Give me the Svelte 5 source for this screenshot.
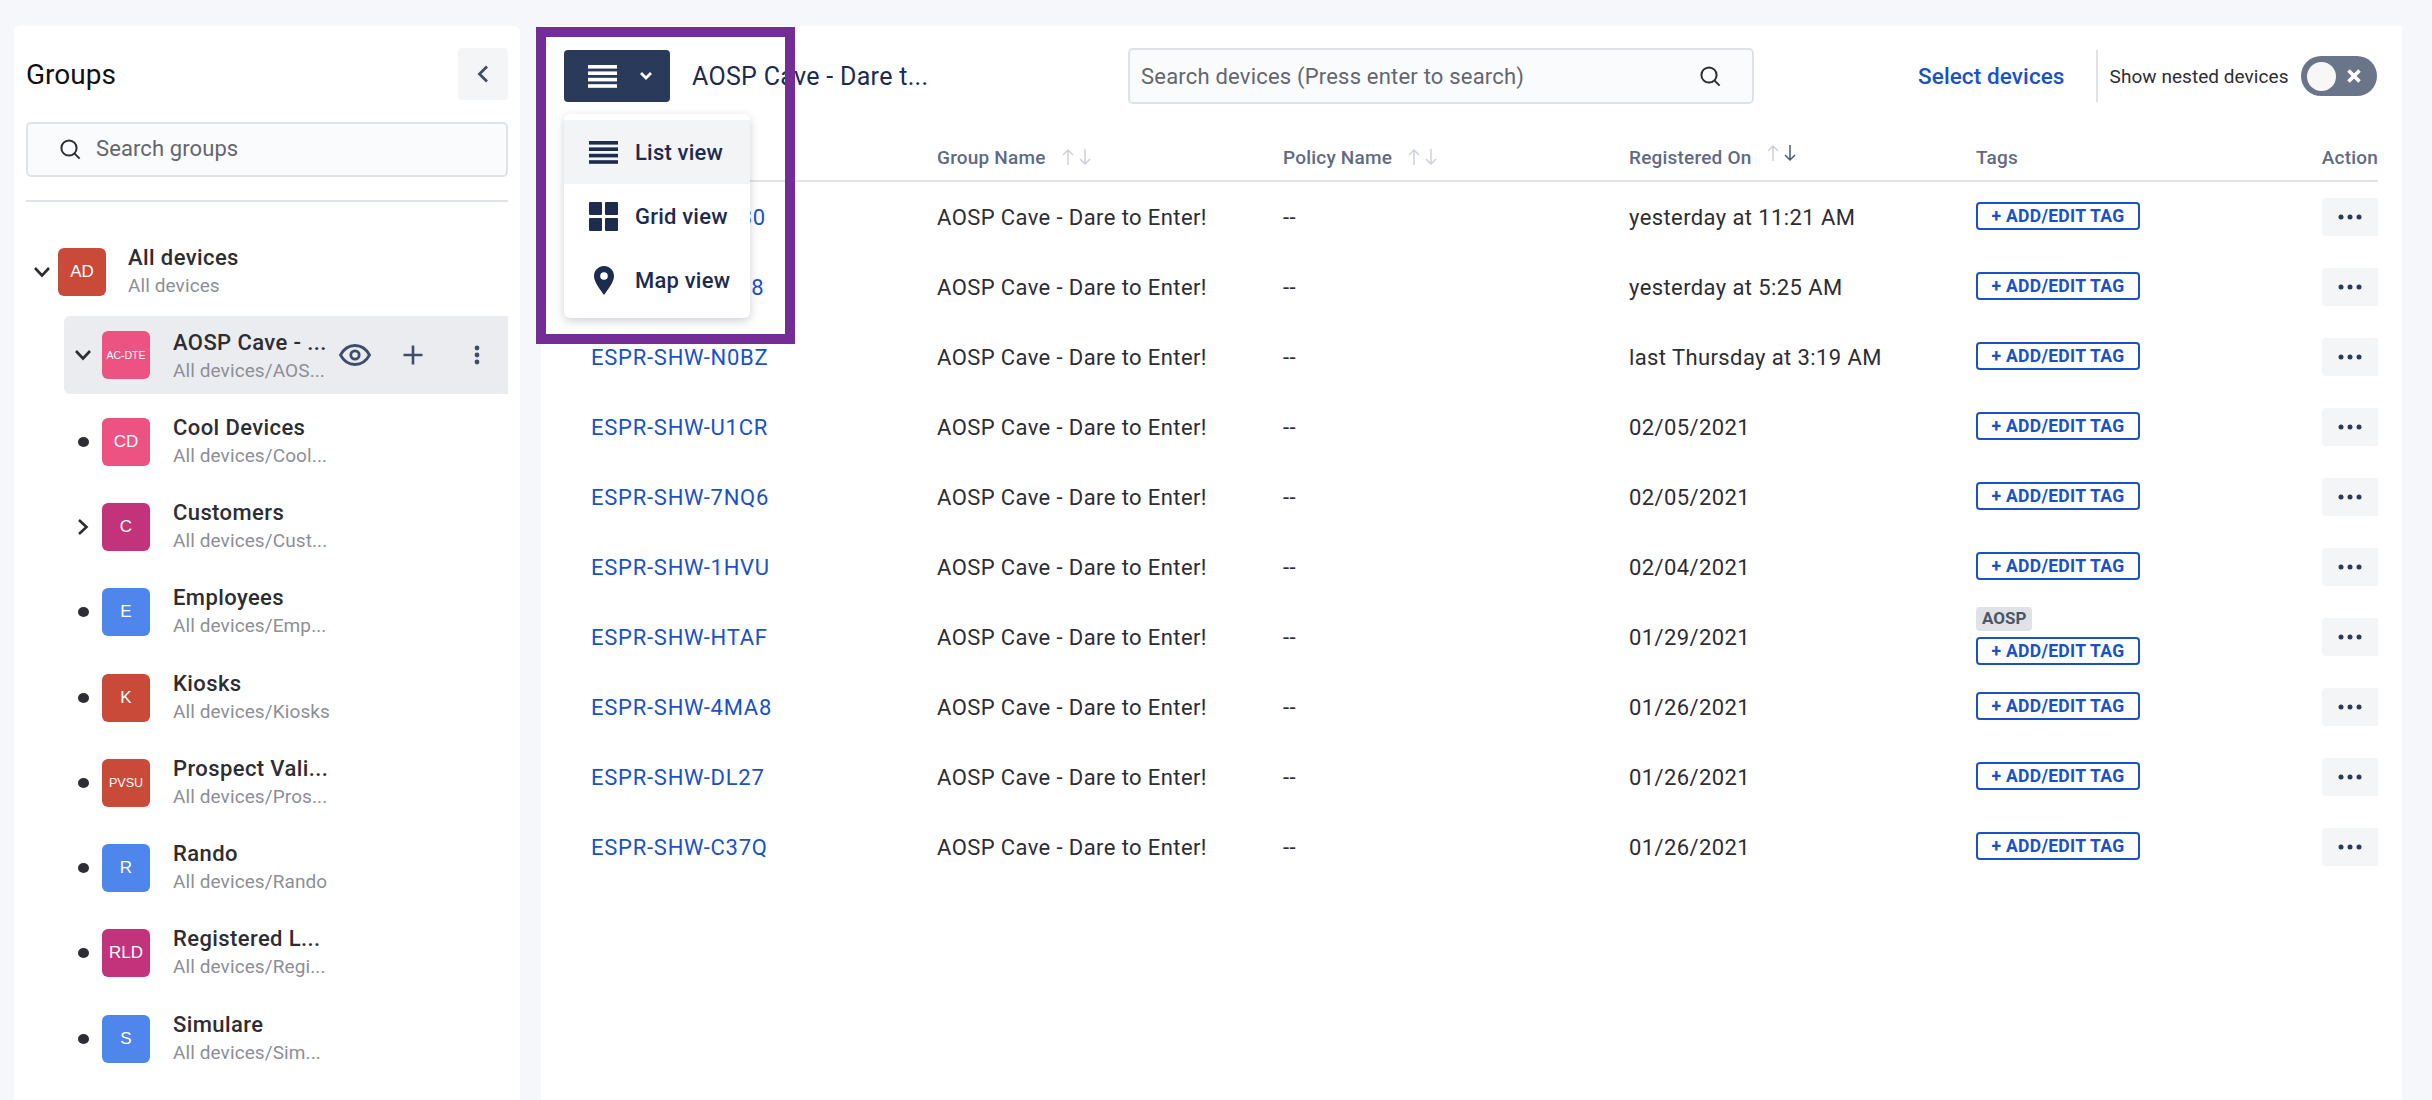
<script>
  const groups = [
    { code: "CD", color: "#ec5282", name: "Cool Devices", path: "All devices/Cool..." },
    { code: "C", color: "#c2337c", name: "Customers", path: "All devices/Cust...", more: true },
    { code: "E", color: "#4f86ec", name: "Employees", path: "All devices/Emp..." },
    { code: "K", color: "#c94a38", name: "Kiosks", path: "All devices/Kiosks" },
    { code: "PVSU", color: "#c94a38", name: "Prospect Vali...", path: "All devices/Pros...", small: true },
    { code: "R", color: "#4f86ec", name: "Rando", path: "All devices/Rando" },
    { code: "RLD", color: "#c2337c", name: "Registered L...", path: "All devices/Regi..." },
    { code: "S", color: "#4f86ec", name: "Simulare", path: "All devices/Sim..." }
  ];

  const devices = [
    { id: "ESPR-SHW-XK30", date: "yesterday at 11:21 AM" },
    { id: "ESPR-SHW-P2F8", date: "yesterday at 5:25 AM" },
    { id: "ESPR-SHW-N0BZ", date: "last Thursday at 3:19 AM" },
    { id: "ESPR-SHW-U1CR", date: "02/05/2021" },
    { id: "ESPR-SHW-7NQ6", date: "02/05/2021" },
    { id: "ESPR-SHW-1HVU", date: "02/04/2021" },
    { id: "ESPR-SHW-HTAF", date: "01/29/2021", tag: "AOSP" },
    { id: "ESPR-SHW-4MA8", date: "01/26/2021" },
    { id: "ESPR-SHW-DL27", date: "01/26/2021" },
    { id: "ESPR-SHW-C37Q", date: "01/26/2021" }
  ];

  const columns = [
    { label: "", sort: false },
    { label: "Group Name", sort: true },
    { label: "Policy Name", sort: true },
    { label: "Registered On", sort: true, active: true },
    { label: "Tags", sort: false }
  ];
</script>

{#snippet chevron(rotate)}
  <svg class="chev" style="transform: rotate({rotate}deg)" viewBox="0 0 18 12" width="18" height="12">
    <path d="M2 2l7 7.5L16 2" fill="none" stroke="#2d2d33" stroke-width="2.6" />
  </svg>
{/snippet}

{#snippet listIcon(color)}
  <svg viewBox="0 0 29 23" width="29" height="23">
    <rect y="0" width="29" height="3.6" fill={color} />
    <rect y="6.4" width="29" height="3.6" fill={color} />
    <rect y="12.8" width="29" height="3.6" fill={color} />
    <rect y="19.2" width="29" height="3.6" fill={color} />
  </svg>
{/snippet}

{#snippet searchIcon()}
  <svg viewBox="0 0 22 22" width="22" height="22">
    <circle cx="10" cy="10" r="7.6" fill="none" stroke="#2d2d33" stroke-width="2" />
    <path d="M15.4 15.4L20.6 20.6" stroke="#2d2d33" stroke-width="2" />
  </svg>
{/snippet}

<div class="page">
  <aside class="sidebar">
    <div class="side-head">
      <h2>Groups</h2>
      <button class="collapse" aria-label="Collapse">
        <svg viewBox="0 0 14 20" width="14" height="20">
          <path d="M11 2.500L3.500 10l7.500 7.500" fill="none" stroke="#3d4d6b" stroke-width="2.800" />
        </svg>
      </button>
    </div>
    <div class="side-search">
      {@render searchIcon()}
      <span>Search groups</span>
    </div>
    <div class="side-rule"></div>

    <div class="root-row">
      <span class="tree-mark">{@render chevron(0)}</span>
      <span class="avatar" style="background: #c94a38">AD</span>
      <div class="names">
        <div class="name">All devices</div>
        <div class="path">All devices</div>
      </div>
    </div>

    <div class="selected-row">
      <span class="tree-mark">{@render chevron(0)}</span>
      <span class="avatar tiny" style="background: #ec5282">AC-DTE</span>
      <div class="names">
        <div class="name">AOSP Cave - ...</div>
        <div class="path">All devices/AOS...</div>
      </div>
      <div class="row-actions">
        <svg viewBox="0 0 32 24" width="32" height="24">
          <path d="M1.500 12C5 5.500 10 2.500 16 2.500S27 5.500 30.500 12C27 18.500 22 21.500 16 21.500S5 18.500 1.500 12z" fill="none" stroke="#3d4d6b" stroke-width="2.800" />
          <circle cx="16" cy="12" r="4.200" fill="none" stroke="#3d4d6b" stroke-width="2.800" />
        </svg>
        <svg viewBox="0 0 20 20" width="20" height="20">
          <path d="M10 0.500v19M0.500 10h19" stroke="#3d4d6b" stroke-width="2.600" />
        </svg>
        <svg class="kebab" viewBox="0 0 6 20" width="6" height="20">
          <circle cx="3" cy="3" r="2.400" fill="#3d4d6b" />
          <circle cx="3" cy="10" r="2.400" fill="#3d4d6b" />
          <circle cx="3" cy="17" r="2.400" fill="#3d4d6b" />
        </svg>
      </div>
    </div>

    {#each groups as group}
      <div class="group-row">
        <span class="tree-mark">
          {#if group.more}
            {@render chevron(-90)}
          {:else}
            <span class="bullet"></span>
          {/if}
        </span>
        <span class="avatar" class:small={group.small} style="background: {group.color}">{group.code}</span>
        <div class="names">
          <div class="name">{group.name}</div>
          <div class="path">{group.path}</div>
        </div>
      </div>
    {/each}
    <div class="group-row">
      <span class="tree-mark"></span>
      <span class="avatar" style="background: #ec5282"></span>
    </div>
  </aside>

  <main class="content">
    <div class="toolbar">
      <button class="view-btn" aria-label="Change view">
        {@render listIcon("#fff")}
        <svg viewBox="0 0 14 10" width="14" height="10">
          <path d="M2 2l5 5 5-5" fill="none" stroke="#fff" stroke-width="2.800" />
        </svg>
      </button>
      <div class="title">AOSP Cave - Dare t...</div>
      <div class="device-search">
        <span>Search devices (Press enter to search)</span>
        {@render searchIcon()}
      </div>
      <a class="select-link" href="#select">Select devices</a>
      <div class="bar-rule"></div>
      <span class="nested-label">Show nested devices</span>
      <div class="toggle">
        <span class="knob"></span>
        <svg viewBox="0 0 16 16" width="16" height="16">
          <path d="M2.500 2.500l11 11M13.500 2.500l-11 11" stroke="#fff" stroke-width="3.600" />
        </svg>
      </div>
    </div>

    <div class="table">
      <div class="thead">
        {#each columns as col}
          <div class="th">
            {col.label}
            {#if col.sort}
              <svg class="sort" class:raised={col.active} viewBox="0 0 34 18" width="34" height="18">
                <path d="M7 17V2M2 7l5-5 5 5" fill="none" stroke="#cdd1da" stroke-width="1.500" />
                <path d="M24 1v15M19 11l5 5 5-5" fill="none" stroke={col.active ? "#4a5a78" : "#cdd1da"} stroke-width="1.500" />
              </svg>
            {/if}
          </div>
        {/each}
        <div class="th action-head">Action</div>
      </div>
      {#each devices as device}
        <div class="tr">
          <a class="device-id" href="#device">{device.id}</a>
          <div>AOSP Cave - Dare to Enter!</div>
          <div>--</div>
          <div>{device.date}</div>
          <div class="tags">
            {#if device.tag}<span class="tag">{device.tag}</span>{/if}
            <span class="add-tag">+ ADD/EDIT TAG</span>
          </div>
          <div class="action-cell">
            <button class="more" aria-label="More">
              <svg viewBox="0 0 24 6" width="24" height="6">
                <circle cx="3" cy="3" r="2.500" fill="#2a3a5a" />
                <circle cx="12" cy="3" r="2.500" fill="#2a3a5a" />
                <circle cx="21" cy="3" r="2.500" fill="#2a3a5a" />
              </svg>
            </button>
          </div>
        </div>
      {/each}
    </div>

    <div class="view-menu">
      <div class="menu-item active">
        <span class="menu-icon">{@render listIcon("#1c2b4e")}</span>List view
      </div>
      <div class="menu-item">
        <span class="menu-icon">
          <svg viewBox="0 0 29 29" width="29" height="29">
            <rect width="13" height="13" rx="1" fill="#1c2b4e" />
            <rect x="16" width="13" height="13" rx="1" fill="#1c2b4e" />
            <rect y="16" width="13" height="13" rx="1" fill="#1c2b4e" />
            <rect x="16" y="16" width="13" height="13" rx="1" fill="#1c2b4e" />
          </svg>
        </span>Grid view
      </div>
      <div class="menu-item">
        <span class="menu-icon">
          <svg viewBox="0 0 20 29" width="20" height="29">
            <path fill-rule="evenodd" d="M10 0C4.500 0 0 4.400 0 10c0 6.500 7 14.500 10 19 3-4.500 10-12.500 10-19C20 4.400 15.500 0 10 0zm0 6.200a3.800 3.800 0 1 1 0 7.600 3.800 3.800 0 0 1 0-7.600z" fill="#1c2b4e" />
          </svg>
        </span>Map view
      </div>
    </div>
  </main>

  <div class="highlight"></div>
</div>

<style>
  :global(body) {
    margin: 0;
    background: #f5f7fb;
  }

  * {
    box-sizing: border-box;
  }

  .page {
    position: relative;
    display: flex;
    height: 1100px;
    padding-top: 26px;
    padding-left: 14px;
    gap: 21px;
    overflow: hidden;
    background: #f5f7fb;
    font-family: Roboto, "Liberation Sans", sans-serif;
    color: #2d2d33;
  }

  /* sidebar */
  .sidebar {
    width: 506px;
    flex: none;
    padding: 22px 12px 0;
    background: #fff;
    border-radius: 6px 6px 0 0;
  }

  .side-head {
    display: flex;
    align-items: center;
    justify-content: space-between;
    height: 52px;
  }

  h2 {
    margin: 0;
    font-size: 28px;
    font-weight: 400;
    color: #111;
  }

  .collapse {
    display: flex;
    align-items: center;
    justify-content: center;
    width: 50px;
    height: 52px;
    padding: 0;
    border: none;
    border-radius: 4px;
    background: #f4f5f6;
  }

  .side-search {
    display: flex;
    align-items: center;
    gap: 15px;
    height: 55px;
    margin-top: 22px;
    padding-left: 31px;
    padding-bottom: 2px;
    border: 2px solid #dfe2e6;
    border-radius: 5px;
    background: #fafbfd;
    font-size: 22px;
    letter-spacing: 0.1px;
    color: #63666c;
  }

  .side-rule {
    height: 2px;
    margin-top: 23px;
    background: #dfe3e8;
  }

  .root-row {
    display: flex;
    align-items: center;
    height: 48px;
    margin-top: 46px;
  }

  .root-row .tree-mark {
    width: 32px;
  }

  .root-row .avatar {
    margin-right: 22px;
  }

  .tree-mark {
    display: flex;
    align-items: center;
    justify-content: center;
    flex: none;
    width: 38px;
  }

  .chev {
    display: block;
  }

  .bullet {
    width: 11px;
    height: 10px;
    border-radius: 50%;
    background: #2d2d33;
  }

  .avatar {
    display: flex;
    align-items: center;
    justify-content: center;
    flex: none;
    width: 48px;
    height: 48px;
    margin-right: 23px;
    border-radius: 6px;
    font-family: "Liberation Sans", sans-serif;
    font-size: 17px;
    color: #fff;
  }

  .avatar.small {
    font-size: 12.500px;
  }

  .avatar.tiny {
    font-size: 10.500px;
  }

  .names {
    min-width: 0;
  }

  .selected-row .names {
    margin-top: 3px;
  }

  .name {
    font-size: 22px;
    letter-spacing: 0.4px;
    font-weight: 500;
    line-height: 27px;
    white-space: nowrap;
  }

  .path {
    font-size: 19px;
    letter-spacing: 0.1px;
    line-height: 29px;
    color: #8d8f97;
    white-space: nowrap;
  }

  .selected-row {
    display: flex;
    align-items: center;
    height: 78px;
    margin: 20px 0 0 38px;
    border-radius: 6px 0 0 6px;
    background: #ebecf0;
  }

  .row-actions {
    display: flex;
    align-items: center;
    margin-left: 12px;
    gap: 32px;
  }

  .kebab {
    margin-left: 19px;
  }

  .group-row {
    display: flex;
    align-items: center;
    height: 85.300px;
    margin-left: 38px;
  }

  .selected-row + .group-row {
    margin-top: 5px;
  }

  /* main */
  .content {
    position: relative;
    flex: none;
    width: 1861px;
    padding: 22px 24px 0 23px;
    background: #fff;
  }

  .toolbar {
    display: flex;
    align-items: center;
    height: 56px;
  }

  .view-btn {
    display: flex;
    align-items: center;
    gap: 22px;
    width: 106px;
    height: 52px;
    padding: 0 0 0 24px;
    border: none;
    border-radius: 4px;
    background: #2a3a5a;
  }

  .title {
    width: 436px;
    margin-left: 22px;
    font-size: 25px;
    letter-spacing: 0.3px;
    color: #1c2b4e;
    white-space: nowrap;
  }

  .device-search {
    display: flex;
    align-items: center;
    justify-content: space-between;
    width: 626px;
    height: 56px;
    padding: 0 31px 0 11px;
    border: 2px solid #dfe2e6;
    border-radius: 5px;
    background: #fafbfd;
    font-size: 22px;
    letter-spacing: 0.2px;
    color: #63666c;
  }

  .select-link {
    margin-left: 164px;
    font-size: 22.500px;
    letter-spacing: 0.1px;
    font-weight: 500;
    color: #1a52c6;
    text-decoration: none;
  }

  .bar-rule {
    width: 2px;
    height: 52px;
    margin-left: 31px;
    background: #dfe2e6;
  }

  .nested-label {
    margin-left: 12px;
    font-size: 19px;
    letter-spacing: 0.05px;
    color: #2d2d33;
  }

  .toggle {
    display: flex;
    align-items: center;
    justify-content: space-between;
    width: 76px;
    height: 40px;
    margin-left: 12px;
    padding: 0 15px 0 6px;
    border-radius: 20px;
    background: #6b7589;
  }

  .knob {
    width: 29px;
    height: 29px;
    border-radius: 50%;
    background: #f7f7f7;
  }

  .table {
    margin: 0 0 0 27px;
  }

  .thead,
  .tr {
    display: grid;
    grid-template-columns: 346px 346px 346px 347px 1fr 56px;
  }

  .thead {
    height: 52px;
    margin-top: 26px;
    padding-top: 14px;
    border-bottom: 2px solid #e2e3e9;
  }

  .th {
    display: flex;
    align-items: center;
    height: 26px;
    font-size: 19px;
    letter-spacing: 0.2px;
    font-weight: 500;
    color: #5f6b84;
    white-space: nowrap;
  }

  .sort {
    margin-left: 15px;
  }

  .sort.raised {
    margin-top: -8px;
  }

  .action-head {
    justify-content: flex-end;
  }

  .tr {
    height: 70px;
    align-items: center;
    font-size: 22px;
    letter-spacing: 0.4px;
    color: #2d2d33;
    white-space: nowrap;
  }

  .device-id {
    letter-spacing: 0.75px;
    color: #1a52c6;
    text-decoration: none;
  }

  .tags {
    display: flex;
    flex-direction: column;
    align-items: flex-start;
    gap: 6px;
    margin-top: -2px;
  }

  .tag {
    padding: 0 6px;
    height: 24px;
    line-height: 23px;
    border-radius: 4px;
    background: #e0e2e6;
    font-size: 17px;
    font-weight: 700;
    letter-spacing: 0;
    color: #4a5568;
  }

  .add-tag {
    display: flex;
    align-items: center;
    justify-content: center;
    width: 164px;
    height: 28px;
    border: 2px solid #1a52c6;
    border-radius: 4px;
    font-size: 17.500px;
    font-weight: 700;
    letter-spacing: 0.3px;
    color: #1a52c6;
  }

  .more {
    display: flex;
    align-items: center;
    justify-content: center;
    width: 56px;
    height: 38px;
    padding: 0;
    border: none;
    border-radius: 4px 0 0 4px;
    background: #f4f5f6;
  }

  /* view dropdown */
  .view-menu {
    position: absolute;
    left: 23px;
    top: 88px;
    width: 186px;
    height: 204px;
    padding-top: 6px;
    background: #fff;
    border-radius: 6px;
    box-shadow: 0 3px 10px rgba(30, 40, 70, 0.22);
  }

  .menu-item {
    display: flex;
    align-items: center;
    height: 64px;
    font-size: 22px;
    letter-spacing: 0.2px;
    font-weight: 500;
    color: #1c2b4e;
  }

  .menu-item.active {
    background: #f3f4f6;
  }

  .menu-icon {
    display: flex;
    justify-content: center;
    width: 29px;
    margin: 0 17px 0 25px;
  }

  .highlight {
    position: absolute;
    left: 536px;
    top: 27px;
    width: 259px;
    height: 317px;
    border: 10px solid #732d94;
    pointer-events: none;
  }
</style>
